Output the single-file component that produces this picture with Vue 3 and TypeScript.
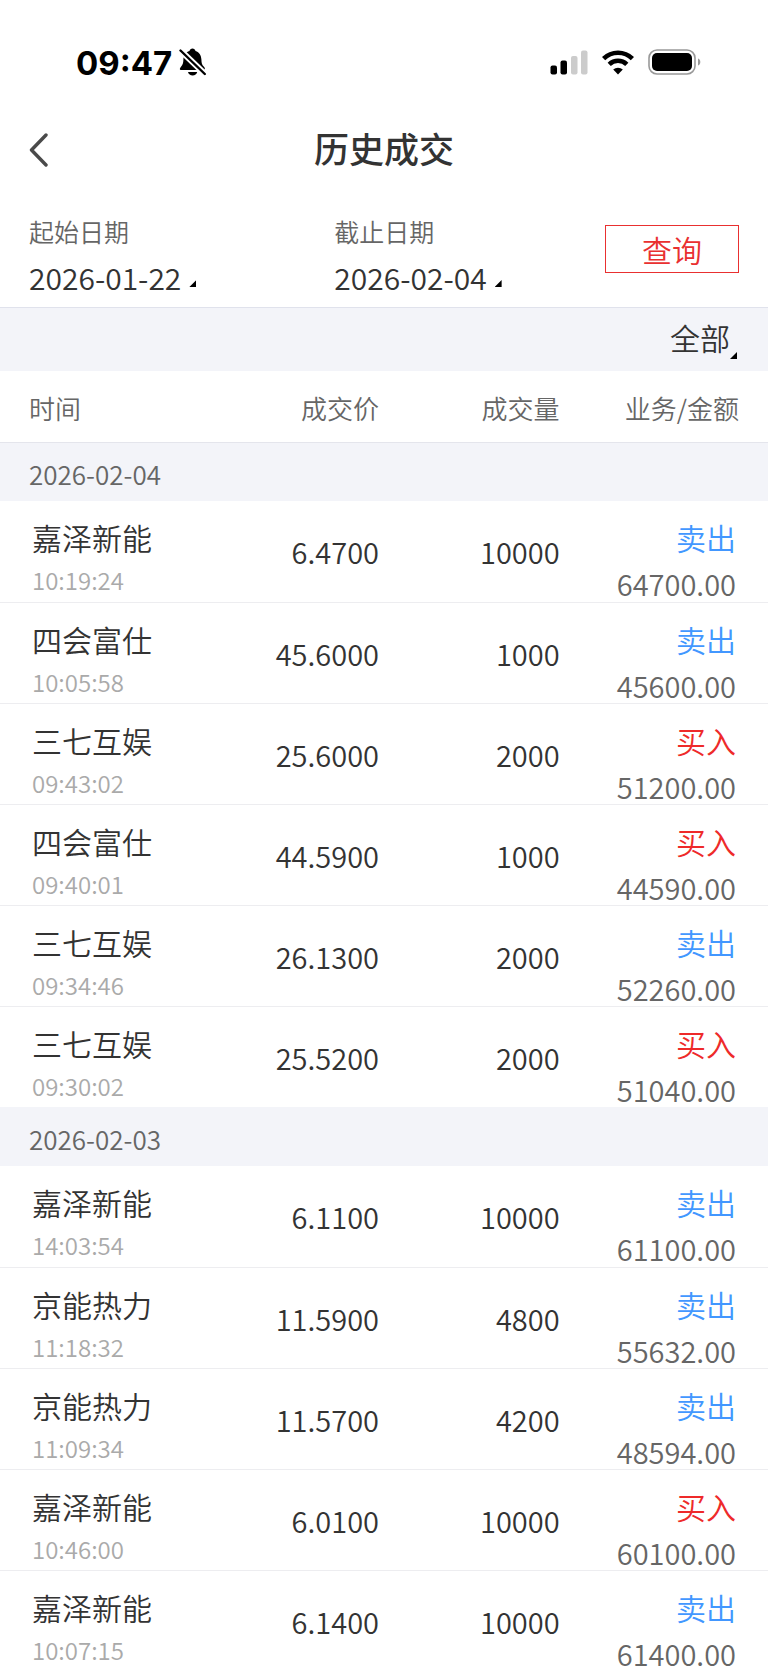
<script setup lang="ts">
import { ref } from 'vue'

type Side = 'sell' | 'buy'

interface Deal {
  name: string
  time: string
  price: string
  volume: string
  side: Side
  amount: string
}

interface DealGroup {
  date: string
  deals: Deal[]
}

const sideLabels: Record<Side, string> = { sell: '卖出', buy: '买入' }

const startDate = ref('2026-01-22')
const endDate = ref('2026-02-04')
const filter = ref('all')

const deal = (
  name: string,
  time: string,
  price: string,
  volume: string,
  side: Side,
  amount: string
): Deal => ({ name, time, price, volume, side, amount })

const groups: DealGroup[] = [
  {
    date: '2026-02-04',
    deals: [
      deal('嘉泽新能', '10:19:24', '6.4700', '10000', 'sell', '64700.00'),
      deal('四会富仕', '10:05:58', '45.6000', '1000', 'sell', '45600.00'),
      deal('三七互娱', '09:43:02', '25.6000', '2000', 'buy', '51200.00'),
      deal('四会富仕', '09:40:01', '44.5900', '1000', 'buy', '44590.00'),
      deal('三七互娱', '09:34:46', '26.1300', '2000', 'sell', '52260.00'),
      deal('三七互娱', '09:30:02', '25.5200', '2000', 'buy', '51040.00'),
    ],
  },
  {
    date: '2026-02-03',
    deals: [
      deal('嘉泽新能', '14:03:54', '6.1100', '10000', 'sell', '61100.00'),
      deal('京能热力', '11:18:32', '11.5900', '4800', 'sell', '55632.00'),
      deal('京能热力', '11:09:34', '11.5700', '4200', 'sell', '48594.00'),
      deal('嘉泽新能', '10:46:00', '6.0100', '10000', 'buy', '60100.00'),
      deal('嘉泽新能', '10:07:15', '6.1400', '10000', 'sell', '61400.00'),
    ],
  },
]
</script>

<template>
  <div class="page">
    <div class="status">
      <div class="status-left">
        <span class="clock">09:47</span>
        <svg class="bell" width="28" height="28" viewBox="0 0 28 28" aria-hidden="true">
          <path
            d="M13.5 0.5c-1.500 0-2.700 1-3 2.400C6.500 4.300 4.500 7.500 4.400 11.500c-0.100 3.800-0.700 5.300-2.400 7.200C0.600 20.300 0.300 22 2 22h22.500c2 0 1.600-2 0.200-3.400-1.700-1.800-2.200-3.400-2.300-7.100-0.100-4-2-7.200-5.900-8.600-0.300-1.400-1.500-2.400-3-2.400z"
          />
          <path d="M9 24h9.200c-0.500 2.300-2.300 3.500-4.600 3.500S9.500 26.300 9 24z" />
          <path d="M-0.500 0.500L28 28" stroke="#fff" stroke-width="6" />
          <path d="M1.500 2.500L25.800 26" stroke="#000" stroke-width="2.400" stroke-linecap="round" />
        </svg>
      </div>
      <div class="status-right">
        <svg width="38" height="25" viewBox="0 0 38 25" aria-hidden="true">
          <rect x="0.500" y="15.500" width="6.500" height="9" rx="2" />
          <rect x="10.500" y="10.500" width="6.500" height="14" rx="2" />
          <rect x="21" y="6" width="6.500" height="18.500" rx="2" fill="#ccc" />
          <rect x="31" y="0.500" width="6.500" height="24" rx="2" fill="#ccc" />
        </svg>
        <svg width="32" height="25" viewBox="0 0 32 25" aria-hidden="true">
          <g fill="none" stroke="#000" stroke-width="4.600">
            <path d="M1.600 8.600a20.500 20.500 0 0 1 28.800 0" />
            <path d="M7.200 14.300a12.700 12.700 0 0 1 17.600 0" />
          </g>
          <path d="M16 24.500l-4.800-4.900a7 7 0 0 1 9.600 0z" />
        </svg>
        <svg width="54" height="26" viewBox="0 0 54 26" aria-hidden="true">
          <rect x="1" y="1" width="46" height="24" rx="8" fill="none" stroke="#999" stroke-width="1.600" />
          <rect x="4" y="4" width="40" height="18" rx="5" />
          <path d="M50 9.500c1.500 0.500 2.300 1.800 2.300 3.500s-0.800 3-2.300 3.500z" fill="#999" />
        </svg>
      </div>
    </div>

    <header class="titlebar">
      <button class="back" type="button" aria-label="返回">
        <svg width="20" height="36" viewBox="0 0 20 36" aria-hidden="true">
          <path
            d="M18 3L3.500 18 18 33"
            fill="none"
            stroke="#4a4a4a"
            stroke-width="3.400"
            stroke-linecap="round"
            stroke-linejoin="round"
          />
        </svg>
      </button>
      <h1>历史成交</h1>
    </header>

    <form class="query" @submit.prevent>
      <div class="field">
        <label for="start-date">起始日期</label>
        <button id="start-date" class="date" type="button">
          <span>{{ startDate }}</span>
          <i class="corner"></i>
        </button>
      </div>
      <div class="field">
        <label for="end-date">截止日期</label>
        <button id="end-date" class="date" type="button">
          <span>{{ endDate }}</span>
          <i class="corner"></i>
        </button>
      </div>
      <button class="submit" type="submit">查询</button>
    </form>

    <div class="filter">
      <select v-model="filter" aria-label="业务类型">
        <option value="all">全部</option>
        <option value="buy">买入</option>
        <option value="sell">卖出</option>
      </select>
      <i class="corner"></i>
    </div>

    <table class="deals">
      <colgroup>
        <col class="c-name" />
        <col class="c-price" />
        <col class="c-volume" />
        <col class="c-amount" />
      </colgroup>
      <thead>
        <tr>
          <th scope="col">时间</th>
          <th scope="col">成交价</th>
          <th scope="col">成交量</th>
          <th scope="col">业务/金额</th>
        </tr>
      </thead>
      <tbody v-for="group in groups" :key="group.date">
        <tr class="day">
          <th colspan="4" scope="rowgroup">{{ group.date }}</th>
        </tr>
        <tr v-for="d in group.deals" :key="d.time" class="deal">
          <td>
            <div class="name">{{ d.name }}</div>
            <div class="time">{{ d.time }}</div>
          </td>
          <td class="num">{{ d.price }}</td>
          <td class="num">{{ d.volume }}</td>
          <td>
            <div class="side" :class="d.side">{{ sideLabels[d.side] }}</div>
            <div class="amount">{{ d.amount }}</div>
          </td>
        </tr>
      </tbody>
    </table>
  </div>
</template>

<style>
body {
  margin: 0;
  background: #fff;
}
</style>

<style scoped>
.page {
  min-height: 100vh;
  background: #fff;
  color: #333;
  font-family: 'Noto Sans CJK SC', sans-serif;
  font-weight: 350;
}

button,
select {
  margin: 0;
  padding: 0;
  border: 0;
  background: none;
  color: inherit;
  font-family: inherit;
  font-weight: inherit;
}

.status {
  display: flex;
  align-items: center;
  justify-content: space-between;
  height: 100px;
  padding: 24px 66px 0 76px;
  box-sizing: border-box;
}

.status-left,
.status-right {
  display: flex;
  align-items: center;
}

.status-left {
  gap: 7px;
}

.status-right {
  gap: 14px;
}

.status svg {
  display: block;
}

.clock {
  padding-top: 2px;
  color: #000;
  font: 700 33px/40px Inter, sans-serif;
}

.titlebar {
  display: grid;
  grid-template-columns: 60px 1fr 60px;
  align-items: center;
  height: 100px;
  padding: 0 28px;
}

.back {
  display: flex;
  justify-self: start;
}

h1 {
  margin: 0;
  padding-bottom: 4px;
  text-align: center;
  font-size: 35px;
  line-height: 50px;
  font-weight: 500;
}

.query {
  display: grid;
  grid-template-columns: 43% 1fr 134px;
  padding: 13px 29px 12px;
  border-bottom: 1px solid #e0e2ec;
}

.field {
  display: flex;
  flex-direction: column;
  align-items: flex-start;
  gap: 10px;
}

label {
  color: #666;
  font-size: 25px;
  line-height: 36px;
}

.date {
  display: flex;
  align-items: flex-end;
  gap: 8px;
  font-size: 30px;
  line-height: 36px;
}

.corner {
  width: 7px;
  height: 7px;
  background: #000;
  clip-path: polygon(100% 0, 100% 100%, 0 100%);
}

.date .corner {
  margin-bottom: 8px;
}

.submit {
  align-self: start;
  height: 48px;
  margin-top: 12px;
  border: 1px solid #e93030;
  color: #e93030;
  font-size: 30px;
  line-height: 44px;
}

.filter {
  display: flex;
  align-items: flex-end;
  justify-content: flex-end;
  height: 63px;
  padding: 0 31px 12px 0;
  box-sizing: border-box;
  background: #f3f4f9;
}

.filter select {
  appearance: none;
  height: 44px;
  font-size: 30px;
  line-height: 44px;
}

.deals {
  width: 100%;
  table-layout: fixed;
  border-collapse: collapse;
}

.c-name {
  width: 26%;
}

.c-price {
  width: 24%;
}

.c-volume {
  width: 23%;
}

.c-amount {
  width: 27%;
}

th,
td {
  padding: 0;
  text-align: right;
  font-weight: inherit;
}

th:first-child {
  padding-left: 29px;
  text-align: left;
}

td:first-child {
  padding-left: 32px;
  text-align: left;
}

thead th {
  height: 71px;
  padding-top: 3px;
  box-sizing: border-box;
  border-bottom: 1px solid #e4e5ec;
  color: #666;
  font-size: 26px;
  line-height: 36px;
}

thead th:nth-child(2),
td:nth-child(2) {
  padding-right: 5px;
}

thead th:nth-child(3),
td:nth-child(3) {
  padding-right: 1px;
}

thead th:last-child {
  padding-right: 29px;
}

.day th {
  height: 59px;
  padding-top: 4px;
  box-sizing: border-box;
  background: #f3f4f9;
  color: #666;
  font-size: 26px;
  line-height: 36px;
}

.deal td {
  height: 101px;
  box-sizing: border-box;
  border-bottom: 1px solid #ededf0;
  vertical-align: top;
}

.deal:last-child td {
  border-bottom-color: #f3f4f9;
}

.deal td:last-child {
  padding-right: 32px;
}

.name,
.side {
  padding-top: 14px;
  font-size: 30px;
  line-height: 44px;
}

.time {
  color: #aaa;
  font-size: 24px;
  line-height: 42px;
}

.num,
.amount {
  font-size: 29px;
  line-height: 30px;
}

.deal .num {
  padding-top: 35px;
}

.amount {
  margin-top: 9px;
  color: #666;
}

.sell {
  color: #4297ff;
}

.buy {
  color: #ee2a2a;
}
</style>
